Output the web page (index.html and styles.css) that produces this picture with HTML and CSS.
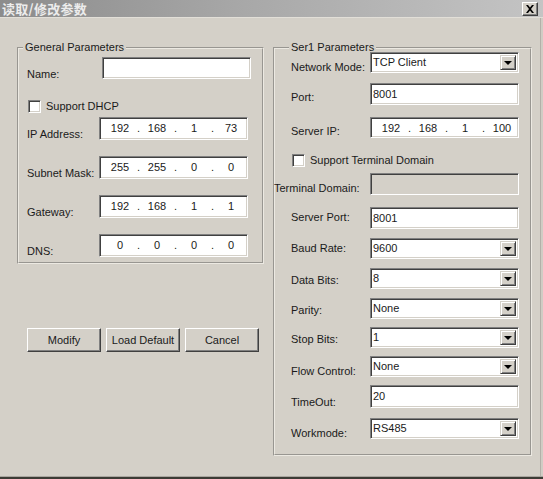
FILE: index.html
```html
<!DOCTYPE html>
<html lang="zh-CN">
<head>
<meta charset="utf-8">
<title>读取/修改参数</title>
<link rel="stylesheet" href="styles.css">
</head>
<body>
<div class="window">
  <div class="titlebar">
    <span class="title">读取/修改参数</span>
    <span class="close-btn">
      <svg width="10" height="8" viewBox="0 0 10 8"><path d="M1 0h2l2 2.5L7 0h2L6 4l3 4H7L5 5.5 3 8H1l3-4z" fill="#000"/></svg>
    </span>
  </div>
  <div class="client">
    <div class="left-col">
      <fieldset class="group group-general">
        <legend>General Parameters</legend>
        <div class="form-general">
          <span class="lbl">Name:</span>
          <div class="edit edit-name"></div>

          <label class="check-row">
            <span class="checkbox"></span>
            <span>Support DHCP</span>
          </label>

          <span class="lbl">IP Address:</span>
          <div class="edit ip"><span>192</span><i>.</i><span>168</span><i>.</i><span>1</span><i>.</i><span>73</span></div>

          <span class="lbl">Subnet Mask:</span>
          <div class="edit ip"><span>255</span><i>.</i><span>255</span><i>.</i><span>0</span><i>.</i><span>0</span></div>

          <span class="lbl">Gateway:</span>
          <div class="edit ip"><span>192</span><i>.</i><span>168</span><i>.</i><span>1</span><i>.</i><span>1</span></div>

          <span class="lbl">DNS:</span>
          <div class="edit ip"><span>0</span><i>.</i><span>0</span><i>.</i><span>0</span><i>.</i><span>0</span></div>
        </div>
      </fieldset>

      <div class="buttons">
        <button class="btn">Modify</button>
        <button class="btn">Load Default</button>
        <button class="btn">Cancel</button>
      </div>
    </div>

    <fieldset class="group group-ser">
      <legend>Ser1 Parameters</legend>
      <div class="form-ser">
        <span class="lbl">Network Mode:</span>
        <div class="edit combo"><span class="combo-text">TCP Client</span><span class="combo-btn"></span></div>

        <span class="lbl lbl-up1">Port:</span>
        <div class="edit text-edit">8001</div>

        <span class="lbl lbl-up1">Server IP:</span>
        <div class="edit ip ip-server"><span>192</span><i>.</i><span>168</span><i>.</i><span>1</span><i>.</i><span>100</span></div>

        <label class="check-row check-terminal">
          <span class="checkbox"></span>
          <span>Support Terminal Domain</span>
        </label>

        <span class="lbl lbl-wide">Terminal Domain:</span>
        <div class="edit edit-disabled"></div>

        <span class="lbl lbl-mid">Server Port:</span>
        <div class="edit text-edit">8001</div>

        <span class="lbl lbl-mid">Baud Rate:</span>
        <div class="edit combo"><span class="combo-text">9600</span><span class="combo-btn"></span></div>

        <span class="lbl lbl-up2">Data Bits:</span>
        <div class="edit combo"><span class="combo-text">8</span><span class="combo-btn"></span></div>

        <span class="lbl lbl-up2">Parity:</span>
        <div class="edit combo"><span class="combo-text">None</span><span class="combo-btn"></span></div>

        <span class="lbl lbl-up2">Stop Bits:</span>
        <div class="edit combo"><span class="combo-text">1</span><span class="combo-btn"></span></div>

        <span class="lbl">Flow Control:</span>
        <div class="edit combo"><span class="combo-text">None</span><span class="combo-btn"></span></div>

        <span class="lbl lbl-down">TimeOut:</span>
        <div class="edit text-edit edit-tall">20</div>

        <span class="lbl">Workmode:</span>
        <div class="edit combo"><span class="combo-text">RS485</span><span class="combo-btn"></span></div>
      </div>
    </fieldset>
  </div>
</div>
</body>
</html>
```

FILE: styles.css
```css
* { box-sizing: border-box; }

html, body {
  margin: 0;
  padding: 0;
}

body {
  width: 543px;
  height: 479px;
  overflow: hidden;
  background: #3c3b35;
  font-family: "Liberation Sans", "DejaVu Sans Condensed", sans-serif;
  font-size: 11px;
  color: #1a1a1a;
}

.window {
  width: 543px;
  height: 477px;
  background: #d4d0c8;
  border-bottom: 1px solid #a9a69f;
  box-shadow: inset -2px 0 #d0ccc4, inset -3px 0 #b3b0a9;
  display: flex;
  flex-direction: column;
}

/* caption bar */
.titlebar {
  height: 18px;
  flex: none;
  display: flex;
  align-items: center;
  justify-content: space-between;
  padding: 0 5px 0 2px;
  background: linear-gradient(to right, #8c8c8c, #a8a8a8 45%, #c4c4c4);
  border-bottom: 1px solid #e2dfd8;
}

.title {
  font-family: "Noto Sans CJK SC", sans-serif;
  font-weight: 700;
  font-size: 13px;
  line-height: 16px;
  color: #ececec;
  letter-spacing: 0.3px;
}

.close-btn {
  width: 16px;
  height: 14px;
  display: flex;
  align-items: center;
  justify-content: center;
  background: #d4d0c8;
  border: 1px solid;
  border-color: #fff #404040 #404040 #fff;
  box-shadow: inset -1px -1px #808080;
}

.client {
  flex: 1;
  display: flex;
  gap: 9px;
  padding: 23px 0 0 17px;
  align-items: flex-start;
}

/* group boxes */
.group {
  margin: 0;
  border: 2px groove #ece9e2;
  min-width: 0;
}

.group legend {
  padding: 0 2px;
  line-height: 13px;
}

.group-general {
  width: 247px;
  padding: 3px 0 5px 8px;
}

.group-general legend { margin-left: -4px; }

.group-ser {
  width: 259px;
  padding: 0 0 15px 16px;
}

.group-ser legend { margin-left: -2px; }

.lbl {
  align-self: start;
  padding-top: 8px;
  line-height: 14px;
  white-space: nowrap;
}

.form-general .lbl { padding-top: 10px; }

.lbl-up1 { padding-top: 7px; }
.lbl-up2 { padding-top: 5px; }
.lbl-mid { padding-top: 3px; }
.lbl-down { padding-top: 10px; }

/* sunken edit field */
.edit {
  width: 149px;
  height: 22px;
  background: #fff;
  border: 1px solid;
  border-color: #808080 #fff #fff #808080;
  box-shadow: inset 1px 1px #404040, inset -1px -1px #d4d0c8;
  align-self: start;
  line-height: 18px;
  padding: 1px 2px;
  white-space: nowrap;
}

.edit-name { margin-left: 3px; }

.edit-disabled { background: #d4d0c8; }

.edit-tall { height: 23px; }

.text-edit { padding-left: 2px; }

/* IP address control */
.ip {
  display: grid;
  grid-template-columns: 32px 5px 32px 5px 32px 5px 32px;
  padding-left: 4px;
  height: 23px;
}

.ip span { text-align: center; }

.ip i {
  font-style: normal;
  text-align: center;
}

.ip-server { height: 21px; }

/* drop-down combo */
.combo {
  display: flex;
  align-items: stretch;
  height: 21px;
  padding: 2px;
  line-height: 17px;
}

.combo-text {
  flex: 1;
  margin-top: -1px;
}

.combo-btn {
  width: 16px;
  flex: none;
  background: #d4d0c8;
  border: 1px solid;
  border-color: #d4d0c8 #404040 #404040 #d4d0c8;
  box-shadow: inset 1px 1px #fff, inset -1px -1px #808080;
  display: flex;
  align-items: center;
  justify-content: center;
}

.combo-btn::after {
  content: "";
  border-left: 4px solid transparent;
  border-right: 4px solid transparent;
  border-top: 4px solid #000;
  margin-top: 1px;
}

/* checkbox rows */
.check-row {
  grid-column: 1 / span 2;
  display: flex;
  align-items: center;
  gap: 5px;
  align-self: start;
  line-height: 14px;
}

.checkbox {
  width: 13px;
  height: 13px;
  background: #fff;
  border: 1px solid;
  border-color: #808080 #fff #fff #808080;
  box-shadow: inset 1px 1px #404040, inset -1px -1px #d4d0c8;
}

.form-general {
  display: grid;
  grid-template-columns: 72px 152px;
  grid-template-rows: 39px 21px 39px 39px 39px 23px;
}

.form-general .check-row { margin-top: 3px; margin-left: 1px; }

.form-ser {
  display: grid;
  grid-template-columns: 79px 149px;
  grid-template-rows: 31px 34px 36px 20px 34px 31px 30px 30px 29px 29px 29px 33px 21px;
  margin-top: -2px;
}

.check-terminal { margin-left: 1px; }

.lbl-wide { margin-left: -17px; }

/* push buttons */
.buttons {
  display: flex;
  gap: 5px;
  margin: 64px 0 0 10px;
}

.btn {
  width: 74px;
  height: 24px;
  padding: 0;
  font: inherit;
  color: #1a1a1a;
  background: #d4d0c8;
  border: 1px solid;
  border-color: #fff #404040 #404040 #fff;
  box-shadow: inset -1px -1px #808080;
}
```
